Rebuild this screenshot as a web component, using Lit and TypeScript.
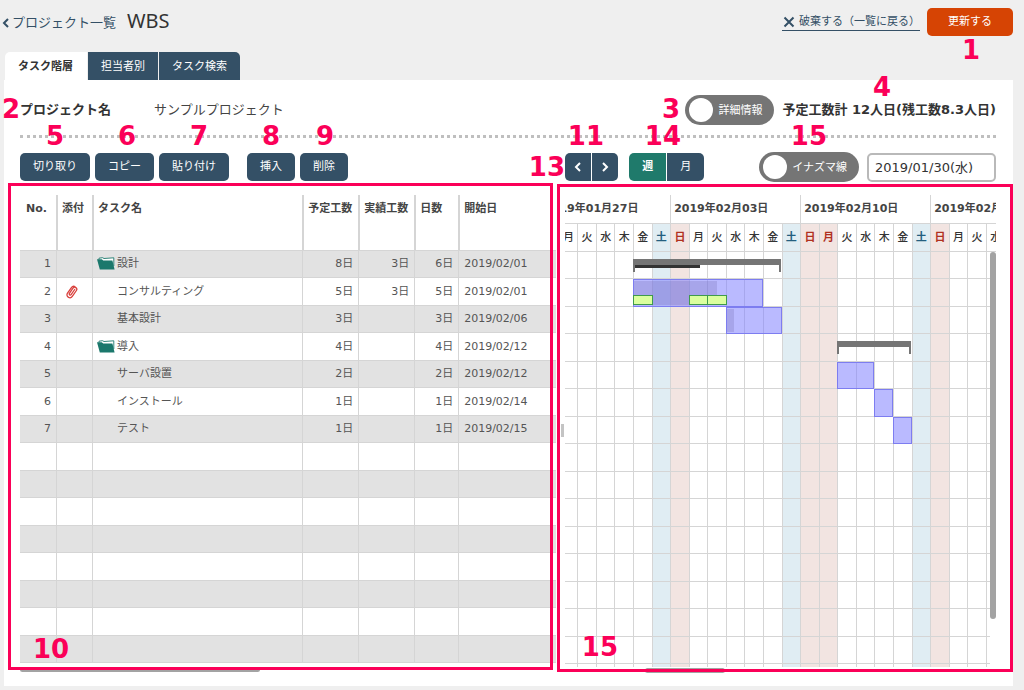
import { LitElement, html, css, svg, nothing } from "lit";
import { customElement, state } from "lit/decorators.js";
import { classMap } from "lit/directives/class-map.js";
import { styleMap } from "lit/directives/style-map.js";

interface Task {
  name: string;
  group?: boolean;
  attached?: boolean;
  planned: string;
  actual: string;
  days: string;
  start: string;
}

interface Bar {
  kind: "summary" | "task" | "done";
  row: number;
  from: number;
  to: number;
  progress?: number;
}

interface Mark {
  label: string;
  top: number;
  left?: number;
  right?: number;
}

const ROW_COUNT = 15;

const TASKS: Task[] = [
  { name: "設計", group: true, planned: "8日", actual: "3日", days: "6日", start: "2019/02/01" },
  { name: "コンサルティング", attached: true, planned: "5日", actual: "3日", days: "5日", start: "2019/02/01" },
  { name: "基本設計", planned: "3日", actual: "", days: "3日", start: "2019/02/06" },
  { name: "導入", group: true, planned: "4日", actual: "", days: "4日", start: "2019/02/12" },
  { name: "サーバ設置", planned: "2日", actual: "", days: "2日", start: "2019/02/12" },
  { name: "インストール", planned: "1日", actual: "", days: "1日", start: "2019/02/14" },
  { name: "テスト", planned: "1日", actual: "", days: "1日", start: "2019/02/15" },
];

const WEEKS = ["2019年01月27日", "2019年02月03日", "2019年02月10日", "2019年02月17日"];
const DAY_NAMES = ["日", "月", "火", "水", "木", "金", "土"];
const HOLIDAYS = [15];
const DAYS = WEEKS.flatMap((_, w) =>
  DAY_NAMES.map((name, d) => ({
    name,
    index: w * 7 + d,
    sat: d === 6,
    sun: d === 0 || HOLIDAYS.includes(w * 7 + d),
  })),
);

// Day columns are counted from 1 (2019/01/27).
const BARS: Bar[] = [
  { kind: "summary", row: 1, from: 6, to: 14, progress: 45 },
  { kind: "task", row: 2, from: 6, to: 13, progress: 65 },
  { kind: "done", row: 2, from: 6, to: 7 },
  { kind: "done", row: 2, from: 9, to: 10 },
  { kind: "done", row: 2, from: 10, to: 11 },
  { kind: "task", row: 3, from: 11, to: 14, progress: 14 },
  { kind: "summary", row: 4, from: 17, to: 21 },
  { kind: "task", row: 5, from: 17, to: 19 },
  { kind: "task", row: 6, from: 19, to: 20 },
  { kind: "task", row: 7, from: 20, to: 21 },
];

const MARKS: Mark[] = [
  { label: "1", top: 35, right: 44 },
  { label: "2", top: 94, left: 2 },
  { label: "3", top: 94, right: 344 },
  { label: "4", top: 72, right: 133 },
  { label: "5", top: 121, left: 46 },
  { label: "6", top: 121, left: 118 },
  { label: "7", top: 121, left: 190 },
  { label: "8", top: 121, left: 262 },
  { label: "9", top: 121, left: 316 },
  { label: "11", top: 121, right: 420 },
  { label: "14", top: 121, right: 343 },
  { label: "15", top: 121, right: 197 },
  { label: "13", top: 152, right: 459 },
  { label: "10", top: 634, left: 33 },
  { label: "15", top: 632, right: 406 },
];

const folderIcon = svg`<svg class="folder" viewBox="0 0 18 13" width="18" height="13" aria-hidden="true">
  <path d="M2 2.600V1.200L5.500.700l1.500.8 9.800-.7V9" fill="#fff" stroke="#1b786c" stroke-width=".9"/>
  <path d="M0 2.200h4.800l1.400 1.400h9.200L17.600 12.400H2.800z" fill="#1b786c"/>
</svg>`;

const clipIcon = svg`<svg viewBox="0 0 12 14" width="12" height="14" role="img" aria-label="添付あり">
  <path d="M8.700 4.500 5.100 9.600a1 1 0 0 1-1.700-1.200L7 3.200A2 2 0 0 1 10.400 5.500L6.300 11.400A2.900 2.900 0 0 1 1.500 8.100L5.600 2.300A2.600 2.600 0 0 1 9 1.500"
    fill="none" stroke="#d9403c" stroke-width="1.300" stroke-linecap="round"/>
</svg>`;

const chevron = (points: string) => svg`<svg viewBox="0 0 8 10" width="8" height="10" aria-hidden="true">
  <polyline points=${points} fill="none" stroke="currentColor" stroke-width="2"/>
</svg>`;

@customElement("app-root")
export class AppRoot extends LitElement {
  @state() private scale: "week" | "month" = "week";

  static styles = css`
    :host {
      display: block;
      position: relative;
      min-height: 100vh;
      overflow: hidden;
      box-sizing: border-box;
      background: #efefef;
      color: #444;
      font: 11px/16px "DejaVu Sans", "Noto Sans CJK JP", sans-serif;
      --navy: #345066;
      --line: #d5d5d5;
      --pink: #fb0058;
    }
    * { box-sizing: border-box; }
    svg { display: block; }
    button, input { font: inherit; margin: 0; }

    .top {
      display: flex;
      align-items: center;
      height: 52px;
      padding: 8px 11px 16px 2px;
    }
    .back {
      display: flex;
      align-items: center;
      gap: 2px;
      padding-top: 2px;
      color: var(--navy);
      font-size: 13px;
      text-decoration: none;
    }
    h1 {
      margin: 0 auto 2px 11px;
      color: #333;
      font: 400 20px/24px "Noto Sans", sans-serif;
    }
    .discard {
      display: flex;
      align-items: center;
      gap: 4px;
      height: 17px;
      margin-right: 7px;
      padding-left: 1px;
      color: var(--navy);
      text-decoration: none;
      border-bottom: 1px solid var(--navy);
    }
    .submit {
      height: 28px;
      padding: 0 21px;
      border: 0;
      border-radius: 5px;
      background: #d64404;
      color: #fff;
    }

    .tabs { display: flex; gap: 1px; margin-left: 5px; }
    .tab {
      height: 28px;
      padding: 1px 13px 0;
      border: 0;
      background: var(--navy);
      color: #fff;
    }
    .tab.current {
      padding: 1px 14px 0 13px;
      border-radius: 5px 0 0 0;
      background: #fff;
      color: #333;
      font-weight: 700;
    }
    .tab:last-child { border-radius: 0 5px 0 0; }

    .panel {
      margin: 0 11px 0 4px;
      padding: 15px 17px 13px 16px;
      background: #fff;
    }
    .project {
      display: flex;
      align-items: center;
      padding-bottom: 10px;
      border-bottom: 3px dotted #bfbfbf;
      font-size: 13px;
    }
    .project dl { display: flex; gap: 43px; margin: 0 auto 0 0; }
    .project dt { font-weight: 700; color: #333; }
    .project dd { margin: 0; }
    .total { margin-left: 8px; color: #333; font-weight: 700; }

    .toggle {
      display: flex;
      align-items: center;
      gap: 5px;
      height: 30px;
      padding: 0 12px 0 4px;
      border-radius: 15px;
      background: #757575;
      color: #fff;
      font-size: 11px;
    }
    .toggle span { padding-top: 2px; }
    .toggle input {
      appearance: none;
      width: 24px;
      height: 24px;
      border-radius: 50%;
      background: #fff;
    }

    .split {
      display: grid;
      grid-template-columns: minmax(0, 56fr) minmax(0, 45fr);
      column-gap: 9px;
    }
    .toolbar { margin-top: 15px; }
    .tools { display: flex; align-items: center; gap: 5px; height: 28px; }
    .group { display: flex; gap: 5px; margin-right: 13px; }
    .btn {
      height: 28px;
      padding: 0 13px;
      border: 0;
      border-radius: 5px;
      background: var(--navy);
      color: #fff;
      white-space: nowrap;
    }
    .pair { display: flex; gap: 1px; margin-right: 6px; }
    .pair .btn:first-child { border-radius: 5px 0 0 5px; }
    .pair .btn:last-child { border-radius: 0 5px 5px 0; }
    .step { display: grid; place-items: center; padding: 0; width: 26px; }
    .btn.on { background: #1f7a6b; font-weight: 700; }
    .tools .toggle { margin-left: auto; }
    .date {
      width: 129px;
      height: 29px;
      margin-left: 3px;
      padding: 0 6px 2px;
      border: 2px solid #b9b9b9;
      border-radius: 5px;
      background: #fff;
      color: #333;
      font-size: 13px;
    }

    .panes { margin-top: 14px; }
    .pane { position: relative; }
    .frame {
      position: absolute;
      border: 3px solid var(--pink);
      pointer-events: none;
    }
    .frame.list { inset: -12px 3px 3px -12px; }
    .frame.chart { inset: -11px -17px 1px -8px; }
    .handle {
      position: absolute;
      left: -4px;
      top: 229px;
      width: 3px;
      height: 13px;
      background: #c4c4c4;
    }

    table {
      width: 100%;
      table-layout: fixed;
      border-spacing: 0;
      color: #555;
    }
    .c-no, .c-clip { width: 36px; }
    .c-num { width: 56px; }
    .c-days { width: 44px; }
    .c-start { width: 98px; }
    th {
      height: 56px;
      padding: 6px 3px 0 4px;
      color: #444;
      text-align: left;
      vertical-align: top;
      white-space: nowrap;
      border-bottom: 1px solid var(--line);
    }
    th:first-child { text-align: center; padding-left: 0; }
    td {
      height: 28px;
      padding: 0 5px;
      white-space: nowrap;
      border-bottom: 1px solid var(--line);
    }
    tbody tr:nth-child(odd) td { height: 27px; background: #e2e2e2; }
    td + td { border-left: 1px solid var(--line); }
    th + th { border-left: 2px solid var(--line); }
    .num { text-align: right; }
    .clip { padding: 0 9px; }
    .name { display: flex; align-items: center; gap: 2px; padding-left: 19px; }
    .name.parent { padding-left: 0; }
    .folder { margin: 0 0 1px -1px; }

    .bar-h {
      height: 5px;
      border-radius: 3px;
      background: #a3a3a3;
    }
    .list-scroll { width: 240px; margin-top: 4px; }
    .chart-scroll { width: 80px; margin: 1px 0 0 80px; }

    .clipbox { overflow: hidden; }
    .strip {
      display: grid;
      grid-template-columns: repeat(28, minmax(18px, 1fr));
      width: 520px;
      min-width: calc(100% + 25px);
      margin-left: -25px;
    }
    .week {
      grid-column: span 7;
      height: 29px;
      padding: 6px 3px 0;
      color: #444;
      font-weight: 700;
      border-left: 1px solid var(--line);
      border-bottom: 1px solid var(--line);
    }
    .day {
      height: 28px;
      padding-top: 6px;
      color: #333;
      font-weight: 500;
      text-align: center;
      border-left: 1px solid var(--line);
      border-bottom: 1px solid var(--line);
    }
    .sat { background: #e0edf3; color: #245f80; font-weight: 700; }
    .sun { background: #f2e4e1; color: #b0301f; font-weight: 700; }

    .body { display: grid; grid-template-columns: minmax(0, 1fr) 6px; }
    .rows {
      grid-template-rows: repeat(7, 27px 28px) 27px 3px;
    }
    .body .strip { min-width: calc(100% + 31px); }
    .col { grid-row: 1 / -1; border-left: 1px solid var(--line); }
    .rule { grid-column: 1 / -1; border-bottom: 1px solid var(--line); }
    .bar-v {
      height: 367px;
      border-radius: 3px;
      background: #a3a3a3;
    }
    .task {
      border: 1px solid #7d7df0;
      background: rgba(130, 130, 255, 0.55);
    }
    .task .fill {
      height: 100%;
      border: solid transparent;
      border-width: 1px 0;
      background: rgba(120, 110, 180, 0.28);
      background-clip: padding-box;
    }
    .done {
      align-self: end;
      height: 10px;
      margin: 0 -1px 2px 0;
      border: 1px solid #3f9a4d;
      background: #dbff9f;
    }
    .summary {
      align-self: start;
      height: 13px;
      margin: 7px 1px 0 0;
      border: 2px solid #757575;
      border-top-width: 6px;
      border-bottom: 0;
    }
    .summary .fill { height: 3px; background: #333; }

    .mark {
      position: absolute;
      z-index: 2;
      color: var(--pink);
      font: 700 26px/30px "DejaVu Sans", sans-serif;
      pointer-events: none;
    }
  `;

  private renderRow(index: number) {
    const task = TASKS[index];
    return html`<tr>
      <td class="num">${task ? index + 1 : nothing}</td>
      <td class="clip">${task?.attached ? clipIcon : nothing}</td>
      <td>
        ${task
          ? html`<div class=${classMap({ name: true, parent: !!task.group })}>
              ${task.group ? folderIcon : nothing}<span>${task.name}</span>
            </div>`
          : nothing}
      </td>
      <td class="num">${task?.planned}</td>
      <td class="num">${task?.actual}</td>
      <td class="num">${task?.days}</td>
      <td>${task?.start}</td>
    </tr>`;
  }

  private renderBar(bar: Bar) {
    return html`<div
      class=${bar.kind}
      style=${styleMap({ gridRow: String(bar.row), gridColumn: `${bar.from} / ${bar.to}` })}
    >
      ${bar.progress
        ? html`<div class="fill" style=${styleMap({ width: `${bar.progress}%` })}></div>`
        : nothing}
    </div>`;
  }

  private renderList() {
    return html`<section class="pane">
      <table>
        <colgroup>
          <col class="c-no" /><col class="c-clip" /><col />
          <col class="c-num" /><col class="c-num" /><col class="c-days" /><col class="c-start" />
        </colgroup>
        <thead>
          <tr>
            <th>No.</th><th>添付</th><th>タスク名</th><th>予定工数</th>
            <th>実績工数</th><th>日数</th><th>開始日</th>
          </tr>
        </thead>
        <tbody>${Array.from({ length: ROW_COUNT }, (_, i) => this.renderRow(i))}</tbody>
      </table>
      <div class="bar-h list-scroll"></div>
      <div class="frame list"></div>
    </section>`;
  }

  private renderChart() {
    return html`<section class="pane">
      <div class="clipbox">
        <div class="strip">
          ${WEEKS.map((w) => html`<div class="week">${w}</div>`)}
          ${DAYS.map((d) => html`<div class=${classMap({ day: true, sat: d.sat, sun: d.sun })}>${d.name}</div>`)}
        </div>
      </div>
      <div class="body">
        <div class="clipbox">
          <div class="strip rows">
            ${DAYS.map(
              (d) => html`<div
                class=${classMap({ col: true, sat: d.sat, sun: d.sun })}
                style=${styleMap({ gridColumn: String(d.index + 1) })}
              ></div>`,
            )}
            ${Array.from(
              { length: ROW_COUNT },
              (_, i) => html`<div class="rule" style=${styleMap({ gridRow: String(i + 1) })}></div>`,
            )}
            ${BARS.map((b) => this.renderBar(b))}
          </div>
        </div>
        <div class="bar-v"></div>
      </div>
      <div class="bar-h chart-scroll"></div>
      <div class="frame chart"></div>
      <div class="handle"></div>
    </section>`;
  }

  render() {
    return html`
      <header class="top">
        <a class="back" href="#projects">${chevron("6,1 2,5 6,9")}プロジェクト一覧</a>
        <h1>WBS</h1>
        <a class="discard" href="#discard">
          <svg viewBox="0 0 12 12" width="12" height="12" aria-hidden="true">
            <path d="M1.500 1.500l9 9M10.500 1.500l-9 9" stroke="currentColor" stroke-width="2" />
          </svg>
          破棄する（一覧に戻る）
        </a>
        <button class="submit">更新する</button>
      </header>
      <nav class="tabs">
        <button class="tab current">タスク階層</button>
        <button class="tab">担当者別</button>
        <button class="tab">タスク検索</button>
      </nav>
      <main class="panel">
        <div class="project">
          <dl><dt>プロジェクト名</dt><dd>サンプルプロジェクト</dd></dl>
          <label class="toggle"><input type="checkbox" /><span>詳細情報</span></label>
          <span class="total">予定工数計 12人日(残工数8.3人日)</span>
        </div>
        <div class="split toolbar">
          <div class="tools">
            <div class="group">
              <button class="btn">切り取り</button>
              <button class="btn">コピー</button>
              <button class="btn">貼り付け</button>
            </div>
            <div class="group">
              <button class="btn">挿入</button>
              <button class="btn">削除</button>
            </div>
          </div>
          <div class="tools">
            <div class="pair">
              <button class="btn step" aria-label="前へ">${chevron("6,1 2,5 6,9")}</button>
              <button class="btn step" aria-label="次へ">${chevron("2,1 6,5 2,9")}</button>
            </div>
            <div class="pair">
              <button
                class=${classMap({ btn: true, on: this.scale === "week" })}
                @click=${() => (this.scale = "week")}
              >週</button>
              <button
                class=${classMap({ btn: true, on: this.scale === "month" })}
                @click=${() => (this.scale = "month")}
              >月</button>
            </div>
            <label class="toggle"><input type="checkbox" /><span>イナズマ線</span></label>
            <input class="date" type="text" aria-label="基準日" .value=${"2019/01/30(水)"} />
          </div>
        </div>
        <div class="split panes">${this.renderList()} ${this.renderChart()}</div>
      </main>
      ${MARKS.map(
        (m) => html`<span
          class="mark"
          style=${styleMap({
            top: `${m.top}px`,
            ...(m.left !== undefined ? { left: `${m.left}px` } : { right: `${m.right}px` }),
          })}
          >${m.label}</span
        >`,
      )}
    `;
  }
}
